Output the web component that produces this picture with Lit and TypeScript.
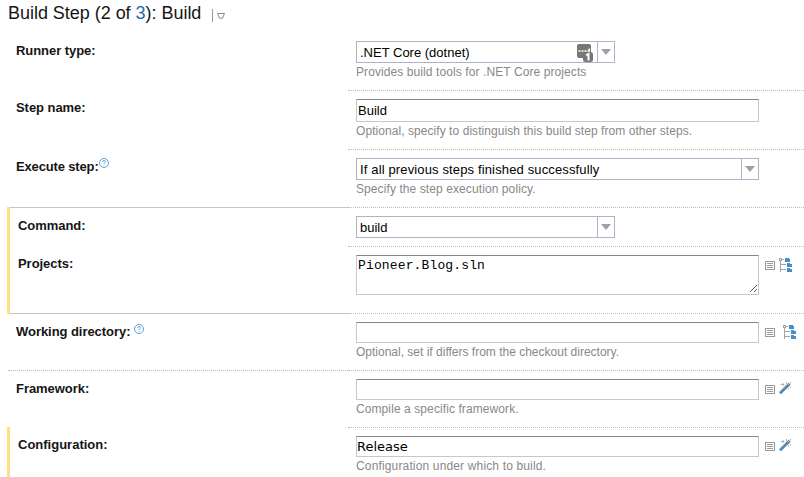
import { LitElement, html, svg, css, nothing } from "lit";
import { customElement } from "lit/decorators.js";
import { classMap } from "lit/directives/class-map.js";

interface Row {
  id: string;
  label: string;
  kind: "select" | "input" | "area";
  value: string;
  hint?: string;
  help?: boolean;
  changed?: boolean;
  tool?: "tree" | "wand";
}

const ROWS: Row[] = [
  { id: "runner", label: "Runner type:", kind: "select", value: ".NET Core (dotnet)", hint: "Provides build tools for .NET Core projects" },
  { id: "name", label: "Step name:", kind: "input", value: "Build", hint: "Optional, specify to distinguish this build step from other steps." },
  { id: "execute", label: "Execute step:", kind: "select", value: "If all previous steps finished successfully", hint: "Specify the step execution policy.", help: true },
  { id: "command", label: "Command:", kind: "select", value: "build", changed: true },
  { id: "projects", label: "Projects:", kind: "area", value: "Pioneer.Blog.sln", changed: true, tool: "tree" },
  { id: "workdir", label: "Working directory:", kind: "input", value: "", hint: "Optional, set if differs from the checkout directory.", help: true, tool: "tree" },
  { id: "framework", label: "Framework:", kind: "input", value: "", hint: "Compile a specific framework.", tool: "wand" },
  { id: "config", label: "Configuration:", kind: "input", value: "Release", hint: "Configuration under which to build.", changed: true, tool: "wand" },
];

const helpIcon = html`<svg class="help" width="10" height="10" viewBox="0 0 10 10">
  <circle cx="5" cy="5" r="4.5" fill="#fff" stroke="#5b9fd0" stroke-width="1"/>
  <path d="M3.5 4.1Q3.5 2.5 5 2.5Q6.5 2.5 6.5 3.8Q6.5 4.5 5.6 5Q5 5.3 5 6M5 6.9V7.8" fill="none" stroke="#5b9fd0" stroke-width=".9"/>
</svg>`;

const listIcon = html`<svg class="list" width="10" height="9" viewBox="0 0 10 9" shape-rendering="crispEdges">
  <path d="M.5 .5H9.5V8.5H.5Z" fill="#fff" stroke="#999"/>
  <path d="M2 2.5H8M2 4.5H8M2 6.5H8" stroke="#999"/>
</svg>`;

const treeIcon = html`<svg class="tree" width="13" height="14" viewBox="0 0 13 14" shape-rendering="crispEdges">
  <path d="M.5 .5H2.5V2.5H.5ZM3 1.5H5M1.5 3V14M2 6.5H7M2 11.5H7" fill="none" stroke="#a3a3a3"/>
  <path d="M6 0H10V1H11V4H6ZM8 5H11V6H13V9H8ZM8 10H11V11H13V14H8Z" fill="#4390c8"/>
</svg>`;

const wandIcon = html`<svg class="wand" width="13" height="13" viewBox="0 0 13 13">
  <path d="M1 11.3L8.4 4" stroke="#4a87bb" stroke-width="2.8"/>
  <path d="M.5 9.9L7.2 3.4" stroke="#c9b9a4" stroke-width=".8"/>
  <path d="M7.8 4.6L10.6 1.8" stroke="#6b7584" stroke-width="2.8"/>
  <path d="M8.6 3.3L9.6 2.3" stroke="#dce6ef" stroke-width="1"/>
  <path d="M4 1.2V3.8M2.7 2.5H5.3M7.5 .2V1.6M11.5 0V1.2M11.5 4.8V6M9.5 6.5V7.7M1.5 2.5H2.4" stroke="#8fb0cb" stroke-width="1"/>
</svg>`;

const badgeIcon = html`<svg class="badge" width="17" height="19" viewBox="0 0 17 19">
  <rect x="0" y="0" width="14" height="14" rx="2" fill="#777"/>
  <path d="M1.5 7H3.5M4.5 7H6.5M7.5 7H9.5M10.5 7H13M12.3 4.5V7.5" stroke="#fff" stroke-width="1.5"/>
  <rect x="6" y="8" width="10" height="10" rx="2.5" fill="#777"/>
  <path d="M9 11.2L11.5 10V16.4" fill="none" stroke="#fff" stroke-width="2"/>
</svg>`;

const grip = html`<svg class="grip" width="8" height="8" viewBox="0 0 8 8" shape-rendering="crispEdges">
  ${[0, 1, 2, 3, 4, 5, 6].map((i) => svg`<rect x=${i} y=${6 - i} width="1" height="1" fill="#555"/>`)}
  ${[0, 1, 2].map((i) => svg`<rect x=${i + 4} y=${6 - i} width="1" height="1" fill="#555"/>`)}
</svg>`;

@customElement("app-root")
export class AppRoot extends LitElement {
  static styles = css`
    :host { display: block; width: 804px; height: 477px; overflow: hidden; background: #fff; color: #151515; font-family: "Liberation Sans", Arial, sans-serif; }
    .head { height: 33px; padding-left: 8px; display: flex; font-size: 18px; line-height: 26px; box-sizing: border-box; white-space: pre; letter-spacing: -0.03px; }
    .head b { font-weight: normal; color: #2a68b0; }
    .mark { margin: 9px 0 0 11px; }
    .row { display: grid; grid-template-columns: 341px 1fr; margin-left: 7px; }
    .label { box-sizing: border-box; padding: 10px 0 0 9px; font-size: 13px; line-height: 15px; font-weight: bold; white-space: nowrap; letter-spacing: -0.05px; border-bottom: 1px solid transparent; }
    .changed .label { border-left: 3px solid #ffdf7f; padding-left: 8px; }
    .cell { box-sizing: border-box; padding: 8px 0 0 8px; border-bottom: 1px dotted #bbb; }
    .runner { height: 58px; } .name { height: 59px; } .execute { height: 58px; } .command { height: 39px; }
    .projects { height: 67px; } .workdir, .framework { height: 57px; } .config { height: 49px; }
    .name .label, .projects .label, .config .label { padding-top: 9px; }
    .execute .label { padding-top: 8px; letter-spacing: -0.15px; border-bottom: 0; background: linear-gradient(90deg, #ffdf7f 3px, #c6c6c6 3px) 0 100% / 100% 1px no-repeat; }
    .projects .label { border-bottom: 0; background: linear-gradient(#c6c6c6, #c6c6c6) 0 100% / 100% 1px no-repeat; background-origin: padding-box; }
    .command .label { border-bottom: 0; }
    .workdir .label { margin-left: 1px; padding: 9px 0 0 8px; border-bottom: 1px dotted #bbb; }
    .framework .label { border-bottom: 0; background: linear-gradient(#ffdf7f, #ffdf7f) 0 100% / 3px 1px no-repeat; }
    .config .label { letter-spacing: 0; border-bottom: 0; }
    .config .cell { border-bottom: 0; }
    .help { vertical-align: 3px; }
    .workdir .help { margin-left: 4px; vertical-align: 2px; }
    .line { display: flex; align-items: flex-start; }
    .field { box-sizing: border-box; display: flex; width: 403px; height: 21px; font-size: 13px; line-height: 19px; color: #000; white-space: nowrap; }
    .input, .area { border: 1px solid #c8c8c8; border-top-color: #858585; padding-left: 1px; }
    .name .field { height: 23px; line-height: 22px; }
    .config .field { font-family: "DejaVu Sans", sans-serif; line-height: 20px; padding-left: 0; }
    .area { height: 40px; position: relative; font-family: "Liberation Mono", monospace; line-height: 19px; letter-spacing: 0.14px; }
    .select { height: 22px; border: 1px solid #b0b3c8; padding-left: 3px; line-height: 21px; }
    .execute .field { letter-spacing: 0.14px; }
    .runner .field, .command .field { width: 259px; }
    .text { flex: 1; }
    .drop { width: 16px; border-left: 1px solid #b0b3c8; display: flex; align-items: center; justify-content: center; }
    .badge { margin: 2px 3px 0 0; }
    .grip { position: absolute; right: 0; bottom: 1px; }
    .list { margin: 6px 0 0 6px; }
    .tree { margin: 3px 0 0 4px; }
    .workdir .label { padding-top: 10px; }
    .workdir .tree { margin-left: 8px; }
    .wand { margin: 3px 0 0 4px; }
    .hint { font-size: 12px; line-height: 14px; color: #888; margin-top: 2px; white-space: nowrap; letter-spacing: 0.09px; }
    .name .hint { letter-spacing: 0.06px; }
    .workdir .hint { letter-spacing: 0; }
    .config .hint { letter-spacing: 0.15px; }
  `;

  private field(r: Row) {
    return html`<div class="field ${r.kind}">
      <span class="text">${r.value}</span>
      ${r.id === "runner" ? badgeIcon : nothing}
      ${r.kind === "select"
        ? html`<span class="drop"><svg width="10" height="6" viewBox="0 0 10 6"><path d="M0 0H10L5 6Z" fill="#a0a0a0"/></svg></span>`
        : nothing}
      ${r.kind === "area" ? grip : nothing}
    </div>`;
  }

  render() {
    return html`
      <div class="head"><span class="title">Build Step (2 of <b>3</b>): Build</span><svg class="mark" width="14" height="13" viewBox="0 0 14 13"><path d="M.5 0V13" stroke="#999"/><path d="M5.5 4.5H12.5L10.5 9.2H7.5Z" fill="none" stroke="#888"/></svg></div>
      ${ROWS.map(
        (r) => html`<div class=${classMap({ row: true, [r.id]: true, changed: !!r.changed })}>
          <div class="label"><span class="caption">${r.label}</span>${r.help ? helpIcon : nothing}</div>
          <div class="cell">
            <div class="line">${this.field(r)}${r.tool ? listIcon : nothing}${r.tool === "tree" ? treeIcon : r.tool === "wand" ? wandIcon : nothing}</div>
            ${r.hint ? html`<div class="hint">${r.hint}</div>` : nothing}
          </div>
        </div>`
      )}
    `;
  }
}
